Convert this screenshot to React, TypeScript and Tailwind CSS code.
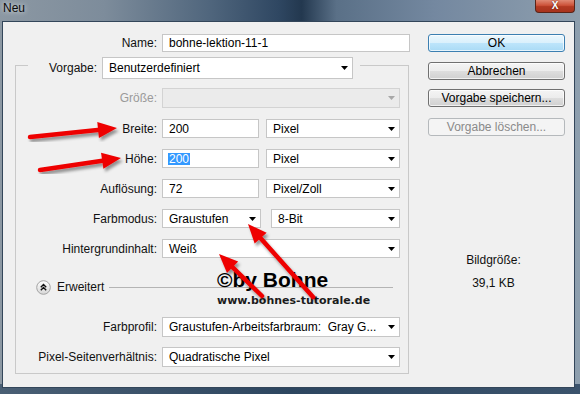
import React from "react";

const Tri = ({ color = "#000" }: { color?: string }) => (
  <svg width="7" height="4" viewBox="0 0 7 4" className="shrink-0">
    <path d="M0 0H7L3.5 4Z" fill={color} />
  </svg>
);

function Select({ cls, text, disabled }: { cls: string; text?: string; disabled?: boolean }) {
  return (
    <div
      className={`${cls} shrink-0 flex items-center justify-between border pl-[6px] pr-[4px] ${
        disabled ? "bg-[#ebebeb] border-[#d3d3d3]" : "bg-white border-[#c6c6c6]"
      }`}
    >
      <span className="whitespace-pre leading-none">{text}</span>
      <Tri color={disabled ? "#a8a8a8" : "#000"} />
    </div>
  );
}

function Input({ cls, children }: { cls: string; children?: React.ReactNode }) {
  return (
    <div className={`${cls} shrink-0 flex items-center border border-[#c6c6c6] bg-white pl-[6px]`}>
      <span className="whitespace-pre leading-none">{children}</span>
    </div>
  );
}

function Row({ label, children, cls, disabled }: { label: string; children: React.ReactNode; cls: string; disabled?: boolean }) {
  return (
    <div className={`${cls} flex items-center gap-[5px]`}>
      <div className={`w-[141px] shrink-0 text-right leading-none ${disabled ? "text-[#9a9a9a]" : "text-[#111]"}`}>{label}</div>
      {children}
    </div>
  );
}

function Btn({ children, kind, cls }: { children: React.ReactNode; kind: "ok" | "normal" | "disabled"; cls: string }) {
  const k =
    kind === "ok"
      ? "border-[#3c7fb1] bg-[linear-gradient(#ecf7fd,#d9f0fc_50%,#bde5fb_50%,#a9daf5)] text-black shadow-[inset_0_0_0_1px_rgba(255,255,255,0.7)]"
      : kind === "normal"
      ? "border-[#707070] bg-[linear-gradient(#f4f4f4,#ececec_50%,#dedede_50%,#d0d0d0)] text-black shadow-[inset_0_0_0_1px_rgba(255,255,255,0.7)]"
      : "border-[#b5b9bc] bg-[#f4f4f4] text-[#8a8a8a]";
  return (
    <div className={`${cls} w-[137px] h-[18px] rounded-[3px] border flex items-center justify-center leading-none ${k}`}>
      {children}
    </div>
  );
}

type P = [number, number];
function arrowShapes(tail: P, tip: P, L = 19, W = 8) {
  const dx = tip[0] - tail[0];
  const dy = tip[1] - tail[1];
  const len = Math.hypot(dx, dy);
  const ux = dx / len;
  const uy = dy / len;
  const nx = -uy;
  const ny = ux;
  const bx = tip[0] - L * ux;
  const by = tip[1] - L * uy;
  const poly = `${tip[0]},${tip[1]} ${bx + W * nx},${by + W * ny} ${bx - W * nx},${by - W * ny}`;
  return { line: { x1: tail[0], y1: tail[1], x2: bx + 2 * ux, y2: by + 2 * uy }, poly };
}

const arrows: [P, P][] = [
  [[30, 137], [117, 128]],
  [[40, 170], [121, 158]],
  [[313, 297], [248, 224]],
  [[262, 296], [219, 254]],
];

export default function App() {
  return (
    <div className="relative w-[580px] h-[394px] overflow-hidden flex flex-col font-['Liberation_Sans',Arial,sans-serif] text-[12px] text-black bg-[linear-gradient(to_right,#8c98a3_0%,#7d8c9b_18%,#50667d_36%,#2f4762_48%,#23384f_52%,#5a7087_58%,#7488a0_75%,#8e9fae_100%)]">
      <div className="absolute inset-x-0 bottom-0 h-[10px] bg-[linear-gradient(to_right,#4a5f74,#2d4660_50%,#3b536c)]" />
      {/* title bar */}
      <div className="relative h-[21px] shrink-0 flex items-start justify-between">
        <span className="ml-[3px] mt-[1px] leading-[14px] text-[#0a0a0a] [text-shadow:0_0_5px_rgba(255,255,255,0.9)]">Neu</span>
        <div className="mr-[5px] w-[40px] h-[13px] rounded-b-[4px] border border-t-0 border-[#5a2418] bg-[linear-gradient(#e08a74,#cc5239_45%,#b23a22_55%,#a8331d)] flex items-center justify-center">
          <span className="text-white text-[10px] font-bold leading-[10px] [text-shadow:0_0_2px_#4a1208]">X</span>
        </div>
      </div>
      {/* content */}
      <div className="relative ml-[2px] mr-[5px] h-[367px] shrink-0 border border-[#33465a] bg-[#f0f0f0] flex">
        {/* left column */}
        <div className="w-[415px] shrink-0 flex flex-col">
          <div className="mt-[12px] h-[18px] flex items-center gap-[5px]">
            <div className="w-[154px] text-right leading-none text-[#111]">Name:</div>
            <Input cls="w-[248px] h-[18px]">bohne-lektion-11-1</Input>
          </div>
          {/* group box */}
          <div className="mt-[13px] ml-[12px] w-[394px] h-[309px] border border-[#c9c9c9] flex flex-col">
            <div className="-mt-[9px] ml-[12px] self-start h-[22px] px-[7px] bg-[#f0f0f0] flex items-center gap-[5px]">
              <div className="w-[62px] text-right leading-none text-[#111]">Vorgabe:</div>
              <Select cls="w-[251px] h-[22px]" text="Benutzerdefiniert" />
            </div>
            <Row label="Größe:" cls="mt-[9px] h-[20px]" disabled>
              <Select cls="w-[238px] h-[20px]" disabled />
            </Row>
            <Row label="Breite:" cls="mt-[11px] h-[19px]">
              <Input cls="w-[97px] h-[19px]">200</Input>
              <Select cls="ml-[2px] w-[134px] h-[19px]" text="Pixel" />
            </Row>
            <Row label="Höhe:" cls="mt-[11px] h-[19px]">
              <div className="w-[97px] h-[19px] shrink-0 flex items-center border border-[#c6c6c6] bg-white pl-[5px]">
                <span className="bg-[#3399ff] text-white leading-[12px] px-[1px]">200</span>
              </div>
              <Select cls="ml-[2px] w-[134px] h-[19px]" text="Pixel" />
            </Row>
            <Row label="Auflösung:" cls="mt-[11px] h-[19px]">
              <Input cls="w-[97px] h-[19px]">72</Input>
              <Select cls="ml-[2px] w-[134px] h-[19px]" text="Pixel/Zoll" />
            </Row>
            <Row label="Farbmodus:" cls="mt-[11px] h-[19px]">
              <Select cls="w-[99px] h-[19px]" text="Graustufen" />
              <Select cls="ml-[5px] w-[129px] h-[19px]" text="8-Bit" />
            </Row>
            <Row label="Hintergrundinhalt:" cls="mt-[11px] h-[19px]">
              <Select cls="w-[238px] h-[19px]" text="Weiß" />
            </Row>
            <div className="mt-[21px] h-[16px] ml-[20px] mr-[15px] flex items-center">
              <svg width="15" height="15" viewBox="0 0 15 15" className="shrink-0">
                <defs>
                  <linearGradient id="cg" x1="0" y1="0" x2="0" y2="1">
                    <stop offset="0" stopColor="#ffffff" />
                    <stop offset="1" stopColor="#d6d6d6" />
                  </linearGradient>
                </defs>
                <circle cx="7.5" cy="7.5" r="6.8" fill="url(#cg)" stroke="#a3a3a3" strokeWidth="1" />
                <path d="M4.8 7.3L7.5 4.6L10.2 7.3M4.8 10.3L7.5 7.6L10.2 10.3" fill="none" stroke="#111" strokeWidth="1.4" />
              </svg>
              <span className="ml-[6px] leading-none text-[#111]">Erweitert</span>
              <div className="ml-[5px] flex-1 h-px bg-[#b4b4b4]" />
            </div>
            <Row label="Farbprofil:" cls="mt-[22px] h-[20px]">
              <Select cls="w-[238px] h-[20px]" text="Graustufen-Arbeitsfarbraum:  Gray G..." />
            </Row>
            <Row label="Pixel-Seitenverhältnis:" cls="mt-[10px] h-[20px]">
              <Select cls="w-[238px] h-[20px]" text="Quadratische Pixel" />
            </Row>
          </div>
        </div>
        {/* right column */}
        <div className="ml-[10px] w-[137px] shrink-0 flex flex-col">
          <Btn kind="ok" cls="mt-[12px]">OK</Btn>
          <Btn kind="normal" cls="mt-[10px]">Abbrechen</Btn>
          <Btn kind="normal" cls="mt-[9px]">Vorgabe speichern...</Btn>
          <Btn kind="disabled" cls="mt-[11px]">Vorgabe löschen...</Btn>
          <div className="mt-[117px] w-[131px] text-center leading-[14px] text-[#111]">Bildgröße:</div>
          <div className="mt-[9px] w-[131px] text-center leading-[14px] text-[#111]">39,1 KB</div>
        </div>
      </div>
      {/* watermark */}
      <div className="absolute left-[217px] top-[269px] flex flex-col text-black">
        <span className="font-['Liberation_Sans',Arial,sans-serif] font-bold text-[21px] leading-[22px]">©by Bohne</span>
        <span className="mt-[4px] font-['DejaVu_Sans',sans-serif] font-bold text-[11px] leading-[11px] text-[#1c1c1c]">www.bohnes-tutorale.de</span>
      </div>
      {/* arrows */}
      <svg className="absolute inset-0 pointer-events-none" width="580" height="394" viewBox="0 0 580 394">
        <defs>
          <filter id="sh" x="-20%" y="-20%" width="140%" height="140%">
            <feDropShadow dx="2" dy="3" stdDeviation="1.5" floodColor="#000" floodOpacity="0.4" />
          </filter>
        </defs>
        {arrows.map(([a, b], i) => {
          const s = arrowShapes(a, b);
          return (
            <g key={i} filter="url(#sh)">
              <line {...s.line} stroke="#ee0000" strokeWidth="4.5" strokeLinecap="round" />
              <polygon points={s.poly} fill="#ee0000" />
            </g>
          );
        })}
      </svg>
    </div>
  );
}
